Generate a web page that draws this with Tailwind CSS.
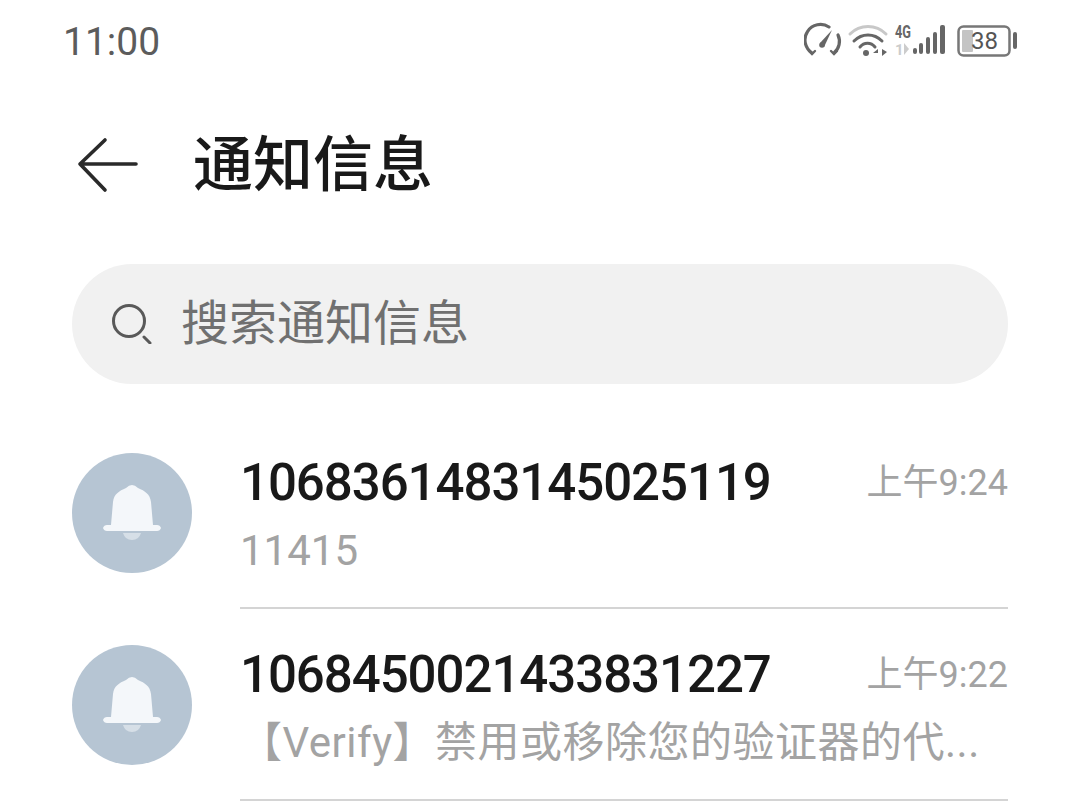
<!DOCTYPE html>
<html lang="zh">

<head>
    <title>通知信息</title>
    <meta charset="utf-8" name="viewport" content="width=device-width, initial-scale=1.0" />
    <script src="https://cdn.jsdelivr.net/npm/@tailwindcss/browser@4"></script>
</head>

<body class="w-[1080px] h-[808px] overflow-hidden bg-white font-['Roboto','Noto_Sans_CJK_SC',sans-serif]">
    <!-- status bar -->
    <div class="flex items-center justify-between h-[84px] pl-[63px] pr-[62px]">
        <span class="text-[39px] leading-none text-[#5c5c5c]">11:00</span>
        <svg width="214" height="48" viewBox="0 -6 214 48" fill="none">
            <!-- speed -->
            <path d="M8 29 A15 15 0 0 1 25 3" stroke="#666" stroke-width="3.2" stroke-linecap="round" />
            <path d="M34 11 A15 15 0 0 1 30 29" stroke="#666" stroke-width="3.2" stroke-linecap="round" />
            <path d="M5 27 L8 30 L11 27 M27 27 L30 30 L33 27" stroke="#666" stroke-width="2.400" stroke-linecap="round" />
            <path d="M16 19 L28 6 L20 23 Z" fill="#666" />
            <circle cx="18" cy="21" r="2.800" fill="#666" />
            <!-- wifi -->
            <path d="M46 10 C56 0 72 0 82 10" stroke="#c8c8c8" stroke-width="3" stroke-linecap="round" />
            <path d="M50 17 C58 9 70 9 78 17" stroke="#666" stroke-width="3" stroke-linecap="round" />
            <path d="M56 23 C60 18 67 18 71 23" stroke="#666" stroke-width="3" stroke-linecap="round" />
            <circle cx="62" cy="29" r="3" fill="#666" />
            <path d="M74 25 L69 29 H74 V32 Z M78 25 V32 L83 28 Z" fill="#666" />
            <!-- signal -->
            <text x="91" y="14" font-family="Roboto" font-size="18" font-weight="700" fill="#666" textLength="16" lengthAdjust="spacingAndGlyphs">4G</text>
            <text x="91" y="31" font-family="Roboto" font-size="15" font-weight="700" fill="#ccc">1</text>
            <path d="M100 19 V31 L105 25 Z" fill="#ccc" />
            <rect x="109" y="24" width="4" height="6" rx="2" fill="#666" />
            <rect x="115" y="19" width="4" height="11" rx="2" fill="#666" />
            <rect x="122" y="13" width="4" height="17" rx="2" fill="#666" />
            <rect x="129" y="8" width="4" height="22" rx="2" fill="#666" />
            <rect x="136" y="1" width="5" height="29" rx="2" fill="#666" />
            <!-- battery -->
            <rect x="154.500" y="2.500" width="51" height="29" rx="5" stroke="#777" stroke-width="2.500" />
            <rect x="158" y="6" width="11" height="22" rx="1" fill="#c4c4c4" />
            <text x="167" y="25" font-family="Roboto" font-size="24" fill="#555">38</text>
            <rect x="209" y="8" width="4" height="17" rx="2" fill="#666" />
        </svg>
    </div>

    <!-- title -->
    <div class="flex items-center h-[164px] pl-[76px]">
        <svg width="64" height="60" viewBox="0 0 64 60" fill="none" stroke="#2a2a2a" stroke-width="3.600" stroke-linecap="round" stroke-linejoin="round">
            <path d="M29 4 L4 28 L29 54 M4 28 H60" />
        </svg>
        <h1 class="ml-[53px] text-[60px] leading-none font-medium text-[#191919]">通知信息</h1>
    </div>

    <!-- search -->
    <div class="flex items-center mt-[16px] mx-[72px] h-[120px] rounded-[60px] bg-[#f1f1f1] pl-[40px]">
        <svg width="40" height="40" viewBox="0 0 40 40" fill="none" stroke="#595959" stroke-width="3" stroke-linecap="round">
            <circle cx="17" cy="17" r="15.500" />
            <path d="M32 33 L38 39" />
        </svg>
        <span class="ml-[29px] text-[48px] leading-none text-[#707070]">搜索通知信息</span>
    </div>

    <!-- list -->
    <div class="mt-[33px] pl-[72px] pr-[72px]">
        <div class="flex items-center h-[192px]">
            <div class="shrink-0 flex items-center justify-center w-[120px] h-[120px] rounded-full bg-[#b6c5d3]">
                <svg width="60" height="60" viewBox="0 0 60 60">
                    <path d="M1 45 Q2 42 5 42 H9 L11 19 C12 11 17 8 24 5 Q30 -1 36 5 C43 8 48 11 49 19 L51 42 H55 Q58 42 59 45 Q58 48 55 48 H5 Q2 48 1 45 Z" fill="#f4f7fa" />
                    <path d="M21 50 H39 Q37 57 30 57 Q23 57 21 50 Z" fill="#d6dfe7" />
                </svg>
            </div>
            <div class="flex-1 min-w-0 ml-[48px] h-full border-b-2 border-[#d4d4d4] pt-[37px]">
                <div class="flex items-start justify-between">
                    <span class="text-[51px] leading-[58px] font-medium tracking-[-1.05px] text-[#191919]">1068361483145025119</span>
                    <span class="text-[36px] leading-[58px] text-[#a3a3a3]">上午9:24</span>
                </div>
                <p class="mt-[14px] text-[42px] leading-[50px] text-[#a3a3a3]">11415</p>
            </div>
        </div>
        <div class="flex items-center h-[192px]">
            <div class="shrink-0 flex items-center justify-center w-[120px] h-[120px] rounded-full bg-[#b6c5d3]">
                <svg width="60" height="60" viewBox="0 0 60 60">
                    <path d="M1 45 Q2 42 5 42 H9 L11 19 C12 11 17 8 24 5 Q30 -1 36 5 C43 8 48 11 49 19 L51 42 H55 Q58 42 59 45 Q58 48 55 48 H5 Q2 48 1 45 Z" fill="#f4f7fa" />
                    <path d="M21 50 H39 Q37 57 30 57 Q23 57 21 50 Z" fill="#d6dfe7" />
                </svg>
            </div>
            <div class="flex-1 min-w-0 ml-[48px] h-full border-b-2 border-[#d4d4d4] pt-[37px]">
                <div class="flex items-start justify-between">
                    <span class="text-[51px] leading-[58px] font-medium tracking-[-1.05px] text-[#191919]">1068450021433831227</span>
                    <span class="text-[36px] leading-[58px] text-[#a3a3a3]">上午9:22</span>
                </div>
                <p class="mt-[14px] text-[42px] leading-[50px] tracking-[0.5px] text-[#a3a3a3] whitespace-nowrap">【Verify】禁用或移除您的验证器的代...</p>
            </div>
        </div>
    </div>
</body>

</html>
